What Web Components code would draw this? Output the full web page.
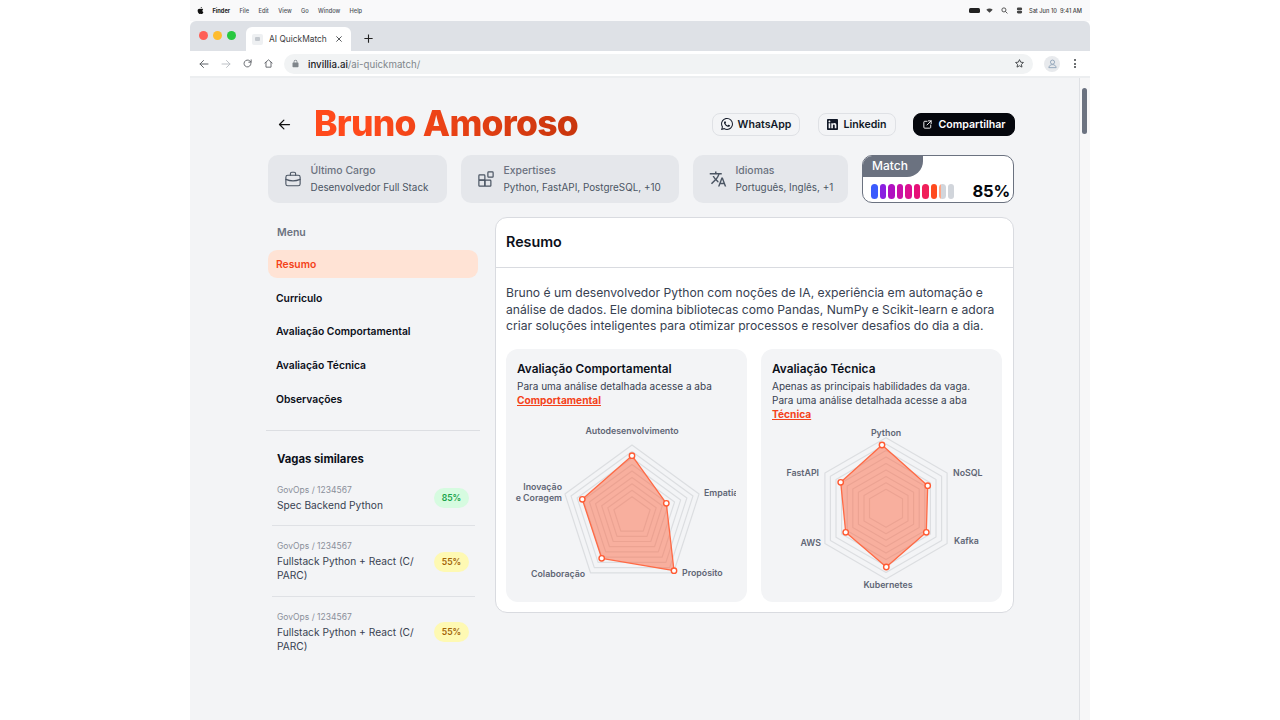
<!DOCTYPE html>
<html lang="pt">
<head>
<meta charset="utf-8">
<title>AI QuickMatch</title>
<style>
    html, body { margin: 0; height: 100%; background: #fff; overflow: hidden; }
    body { font-family: Inter, "Noto Sans", sans-serif; display: flex; justify-content: center; }
    #frame { width: 900px; height: 720px; display: flex; flex-direction: column; flex: none; }
</style>
</head>
<body>
<div id="frame">
    <mac-menubar></mac-menubar>
    <browser-chrome></browser-chrome>
    <app-page>
        <profile-header name="Bruno Amoroso"></profile-header>
        <stat-row>
            <stat-card style="width:179px" icon="case" label="Último Cargo" value="Desenvolvedor Full Stack"></stat-card>
            <stat-card style="width:218px" icon="blocks" label="Expertises" value="Python, FastAPI, PostgreSQL, +10"></stat-card>
            <stat-card style="width:155px" icon="lang" label="Idiomas" value="Português, Inglês, +1"></stat-card>
            <match-card value="85%"></match-card>
        </stat-row>
        <page-columns>
            <side-bar slot="side">
                <side-menu></side-menu>
                <job-item ref="GovOps / 1234567" title="Spec Backend Python" score="85%" tone="good"></job-item>
                <job-item ref="GovOps / 1234567" title="Fullstack Python + React (C/ PARC)" score="55%" tone="mid"></job-item>
                <job-item ref="GovOps / 1234567" title="Fullstack Python + React (C/ PARC)" score="55%" tone="mid" last></job-item>
            </side-bar>
            <summary-panel slot="main" heading="Resumo">
                <p>Bruno é um desenvolvedor Python com noções de IA, experiência em automação e análise de dados. Ele domina bibliotecas como Pandas, NumPy e Scikit-learn e adora criar soluções inteligentes para otimizar processos e resolver desafios do dia a dia.</p>
                <score-card slot="cards" heading="Avaliação Comportamental" text="Para uma análise detalhada acesse a aba" link="Comportamental" chart="behaviour"></score-card>
                <score-card slot="cards" heading="Avaliação Técnica" text="Apenas as principais habilidades da vaga. Para uma análise detalhada acesse a aba" link="Técnica" chart="tech"></score-card>
            </summary-panel>
        </page-columns>
    </app-page>
</div>

<script>
const ICONS = {
    apple: '<path d="M12.152 6.896c-.948 0-2.415-1.078-3.96-1.04-2.04.027-3.91 1.183-4.961 3.014-2.117 3.675-.546 9.103 1.519 12.09 1.013 1.454 2.208 3.09 3.792 3.039 1.52-.065 2.09-.987 3.935-.987 1.831 0 2.35.987 3.96.948 1.637-.026 2.676-1.48 3.676-2.948 1.156-1.688 1.636-3.325 1.662-3.415-.039-.013-3.182-1.221-3.22-4.857-.026-3.04 2.48-4.494 2.597-4.559-1.429-2.09-3.623-2.324-4.39-2.376-2-.156-3.675 1.09-4.61 1.09zM15.53 3.83c.843-1.012 1.4-2.427 1.245-3.83-1.207.052-2.662.805-3.532 1.818-.78.896-1.454 2.338-1.273 3.714 1.338.104 2.715-.688 3.559-1.701" fill="currentColor"/>',
    whatsapp: '<path fill="currentColor" d="M17.472 14.382c-.297-.149-1.758-.867-2.03-.967-.273-.099-.471-.148-.67.15-.197.297-.767.966-.94 1.164-.173.199-.347.223-.644.075-.297-.15-1.255-.463-2.39-1.475-.883-.788-1.48-1.761-1.653-2.059-.173-.297-.018-.458.13-.606.134-.133.298-.347.446-.52.149-.174.198-.298.298-.497.099-.198.05-.371-.025-.52-.075-.149-.669-1.612-.916-2.207-.242-.579-.487-.5-.669-.51-.173-.008-.371-.01-.57-.01-.198 0-.52.074-.792.372-.272.297-1.04 1.016-1.04 2.479 0 1.462 1.065 2.875 1.213 3.074.149.198 2.096 3.2 5.077 4.487.709.306 1.262.489 1.694.625.712.227 1.36.195 1.871.118.571-.085 1.758-.719 2.006-1.413.248-.694.248-1.289.173-1.413-.074-.124-.272-.198-.57-.347m-5.421 7.403h-.004a9.87 9.87 0 01-5.031-1.378l-.361-.214-3.741.982.998-3.648-.235-.374a9.86 9.86 0 01-1.51-5.26c.001-5.45 4.436-9.884 9.888-9.884 2.64 0 5.122 1.03 6.988 2.898a9.825 9.825 0 012.893 6.994c-.003 5.45-4.437 9.884-9.885 9.884m8.413-18.297A11.815 11.815 0 0012.05 0C5.495 0 .16 5.335.157 11.892c0 2.096.547 4.142 1.588 5.945L.057 24l6.305-1.654a11.882 11.882 0 005.683 1.448h.005c6.554 0 11.89-5.335 11.893-11.893a11.821 11.821 0 00-3.48-8.413z"/>',
    linkedin: '<path fill="currentColor" d="M20.447 20.452h-3.554v-5.569c0-1.328-.027-3.037-1.852-3.037-1.853 0-2.136 1.445-2.136 2.939v5.667H9.351V9h3.414v1.561h.046c.477-.9 1.637-1.85 3.37-1.85 3.601 0 4.267 2.37 4.267 5.455v6.286zM5.337 7.433c-1.144 0-2.063-.926-2.063-2.065 0-1.138.92-2.063 2.063-2.063 1.14 0 2.064.925 2.064 2.063 0 1.139-.925 2.065-2.064 2.065zm1.782 13.019H3.555V9h3.564v11.452zM22.225 0H1.771C.792 0 0 .774 0 1.729v20.542C0 23.227.792 24 1.771 24h20.451C23.2 24 24 23.227 24 22.271V1.729C24 .774 23.2 0 22.222 0h.003z"/>',
    share: '<g fill="none" stroke="currentColor" stroke-width="2" stroke-linecap="round" stroke-linejoin="round"><path d="M11 5H6a2 2 0 0 0-2 2v11a2 2 0 0 0 2 2h11a2 2 0 0 0 2-2v-5"/><path d="M14 4h6v6M20 4l-9 9"/></g>',
    case: '<g fill="none" stroke="currentColor" stroke-width="1.5" stroke-linejoin="round" stroke-linecap="round"><rect x="2.5" y="7" width="19" height="14" rx="2.5"/><path d="M8.5 7V5a2 2 0 0 1 2-2h3a2 2 0 0 1 2 2v2M2.5 12.5c6 2.6 13 2.6 19 0"/></g>',
    blocks: '<g fill="none" stroke="currentColor" stroke-width="1.6" stroke-linejoin="round"><rect x="2.5" y="6.5" width="8" height="7" rx="1"/><rect x="2.5" y="13.5" width="8" height="8" rx="1"/><rect x="10.5" y="13.5" width="8" height="8" rx="1"/><rect x="14.5" y="2.5" width="7" height="7" rx="1"/></g>',
    lang: '<path fill="currentColor" d="M12.87 15.07l-2.54-2.51.03-.03c1.74-1.94 2.98-4.17 3.71-6.53H17V4h-7V2H8v2H1v1.99h11.17C11.5 7.92 10.44 9.75 9 11.35 8.07 10.32 7.3 9.19 6.69 8h-2c.73 1.63 1.73 3.17 2.98 4.56l-5.09 5.02L4 19l5-5 3.11 3.11.76-2.04zM18.5 10h-2L12 22h2l1.12-3h4.75L21 22h2l-4.5-12zm-2.62 7l1.62-4.33L19.12 17h-3.24z"/>',
    back: '<path d="M20 12H4M11 5l-7 7 7 7" fill="none" stroke="currentColor" stroke-width="2" stroke-linecap="round" stroke-linejoin="round"/>',
    forward: '<path d="M4 12h16M13 5l7 7-7 7" fill="none" stroke="currentColor" stroke-width="2" stroke-linecap="round" stroke-linejoin="round"/>',
    reload: '<path d="M19.5 12a7.5 7.5 0 1 1-2.2-5.3L20 9.2M20 4v5.2h-5.2" fill="none" stroke="currentColor" stroke-width="2" stroke-linecap="round" stroke-linejoin="round"/>',
    home: '<path d="M4 11l8-7 8 7M6.5 9.5V20h11V9.5" fill="none" stroke="currentColor" stroke-width="2" stroke-linejoin="round" stroke-linecap="round"/>',
    lock: '<path fill="currentColor" d="M18 9h-1V7a5 5 0 0 0-10 0v2H6a2 2 0 0 0-2 2v9a2 2 0 0 0 2 2h12a2 2 0 0 0 2-2v-9a2 2 0 0 0-2-2zM9 7a3 3 0 0 1 6 0v2H9z"/>',
    star: '<path d="M12 3.5l2.6 5.6 6 .7-4.5 4.1 1.3 6-5.4-3-5.4 3 1.3-6L3.4 9.8l6-.7z" fill="none" stroke="currentColor" stroke-width="2" stroke-linejoin="round"/>',
    close: '<path d="M5 5l14 14M19 5L5 19" fill="none" stroke="currentColor" stroke-width="2.6" stroke-linecap="round"/>',
    plus: '<path d="M12 3v18M3 12h18" fill="none" stroke="currentColor" stroke-width="2.4"/>',
    wifi: '<path fill="currentColor" d="M12 20L1 9c6-5.5 16-5.5 22 0z"/>',
    search: '<g fill="none" stroke="currentColor" stroke-width="3"><circle cx="10" cy="10" r="7"/><path d="M15 15l7 7"/></g>',
    control: '<g fill="currentColor"><rect x="3" y="2" width="18" height="9" rx="4.5"/><rect x="3" y="13" width="18" height="9" rx="4.5"/></g>',
    user: '<g fill="none" stroke="#8fa3b8" stroke-width="2"><circle cx="12" cy="9" r="4.5"/><path d="M4 21c1-5 4-6.5 8-6.5s7 1.5 8 6.5z"/></g>'
};
const svgIcon = (name, size) => `<svg width="${size}" height="${size}" viewBox="0 0 24 24" aria-hidden="true">${ICONS[name]}</svg>`;

class MacMenubar extends HTMLElement {
    connectedCallback() {
        const root = this.attachShadow({mode: 'open'});
        root.innerHTML = `
        <style>
            :host { display: flex; align-items: center; height: 21px; background: #f9f9fa; color: #4b4f57;
                    font: 500 5.7px Inter, sans-serif; padding: 0 8px 0 7px; box-sizing: border-box; flex: none; }
            .left { display: flex; align-items: center; gap: 9.4px; }
            .apple { color: #111; display: flex; margin-right: -1px; }
            b { color: #222; font-weight: 700; }
            .right { margin-left: auto; display: flex; align-items: center; gap: 8px; color: #444; }
            .right .ctl { margin-right: -2px; display: flex; }
            .bat { width: 11px; height: 5px; border-radius: 1.5px; background: #222; margin-right: -2px; }
        </style>
        <div class="left"><span class="apple">${svgIcon('apple', 7)}</span><b>Finder</b><span>File</span><span>Edit</span><span>View</span><span>Go</span><span>Window</span><span>Help</span></div>
        <div class="right"><span class="bat"></span>${svgIcon('wifi', 7)}${svgIcon('search', 7)}<span class="ctl">${svgIcon('control', 7)}</span><span>Sat Jun 10&nbsp; 9:41 AM</span></div>`;
    }
}

class BrowserChrome extends HTMLElement {
    connectedCallback() {
        const root = this.attachShadow({mode: 'open'});
        root.innerHTML = `
        <style>
            :host { display: block; flex: none; font-family: Inter, sans-serif; color: #3c4043; }
            .strip { height: 30px; background: #dee1e6; border-radius: 6px 6px 0 0; display: flex; align-items: flex-end; box-sizing: border-box; }
            .lights { display: flex; gap: 5px; width: 56px; padding: 0 0 11px 9px; box-sizing: border-box; }
            .lights i { width: 9px; height: 9px; border-radius: 50%; }
            .tab { width: 105px; height: 24px; background: #fff; border-radius: 6px 6px 0 0; display: flex; align-items: center;
                   font-size: 8.4px; padding: 0 8px 0 6px; box-sizing: border-box; }
            .fav { width: 11px; height: 11px; background: #eef0f2; border-radius: 2px; margin-right: 6px; display: flex; align-items: center; justify-content: center; }
            .fav i { width: 5px; height: 4px; background: #c3c8ce; border-radius: 1px; }
            .tab svg { margin-left: auto; }
            .plus { margin: 0 0 7px 12px; display: flex; color: #222; }
            .bar { height: 25px; background: #fff; display: flex; align-items: center; padding-left: 8px; box-sizing: border-box; }
            .nav { display: flex; gap: 10px; width: 86px; color: #5f6368; flex: none; }
            .nav .off { color: #bdc1c6; }
            .omni { width: 749px; height: 20px; border-radius: 10px; background: #f1f3f4; display: flex; align-items: center;
                    padding: 0 8px 0 7px; box-sizing: border-box; font-size: 9.7px; gap: 8px; flex: none; }
            .omni span { color: #80868b; } .omni b { font-weight: 500; color: #202124; }
            .omni div { padding-top: 1px; }
            .omni .star { margin-left: auto; display: flex; color: #3c4043; }
            .lock { display: flex; color: #5f6368; }
            .avatar { width: 16px; height: 16px; border-radius: 50%; background: #e8eaed; display: flex; align-items: center; justify-content: center; margin-left: 11px; }
            .dots { margin-left: 14px; display: flex; flex-direction: column; gap: 1.5px; }
            .dots i { width: 2px; height: 2px; border-radius: 50%; background: #3c4043; }
            .edge { height: 2px; background: #eceef0; }
        </style>
        <div class="strip">
            <div class="lights"><i style="background:#ff5f57"></i><i style="background:#febc2e"></i><i style="background:#28c840"></i></div>
            <div class="tab"><span class="fav"><i></i></span>AI QuickMatch${svgIcon('close', 8)}</div>
            <span class="plus">${svgIcon('plus', 11)}</span>
        </div>
        <div class="bar">
            <div class="nav">${svgIcon('back', 12)}<span class="off" style="display:flex">${svgIcon('forward', 12)}</span>${svgIcon('reload', 11)}${svgIcon('home', 11)}</div>
            <div class="omni"><span class="lock">${svgIcon('lock', 9)}</span><div><b>invillia.ai</b><span>/ai-quickmatch/</span></div><span class="star">${svgIcon('star', 11)}</span></div>
            <span class="avatar">${svgIcon('user', 11)}</span>
            <span class="dots"><i></i><i></i><i></i></span>
        </div>
        <div class="edge"></div>`;
    }
}

class AppPage extends HTMLElement {
    constructor() {
        super();
        const root = this.attachShadow({mode: 'open'});
        root.innerHTML = `
        <style>
            :host { display: flex; flex: 1; min-height: 0; background: #f3f4f6; }
            .content { width: 889px; box-sizing: border-box; padding: 32px 0 0 78px; }
            .track { width: 11px; box-sizing: border-box; border-left: 1px solid #dfe1e5; background: #f7f7f8; padding: 10px 0 0 2px; }
            .thumb { width: 5px; height: 46px; border-radius: 3px; background: #6b7280; }
        </style>
        <div class="content"><slot></slot></div>
        <div class="track"><div class="thumb"></div></div>`;
    }
}

class ProfileHeader extends HTMLElement {
    connectedCallback() {
        const root = this.attachShadow({mode: 'open'});
        root.innerHTML = `
        <style>
            :host { display: flex; align-items: center; height: 28px; width: 747px; margin-bottom: 17px; }
            .back { display: flex; margin: 0 21px 0 9px; color: #111; }
            h1 { margin: 0; font: 800 35.5px/1 Inter, sans-serif; letter-spacing: -.75px; padding-left: 1px;
                 background: linear-gradient(100deg, #ff4a1c 20%, #c8350c); -webkit-background-clip: text; background-clip: text; color: transparent; }
            .btns { margin-left: auto; display: flex; }
            a { display: flex; align-items: center; justify-content: center; gap: 5px; height: 23px; box-sizing: border-box; border: 1px solid #dfe1e5;
                border-radius: 8px; font: 600 10.6px Inter, sans-serif; color: #111827; }
            a.dark { background: #05070d; color: #fff; border-color: #05070d; margin-left: 17px; }
        </style>
        <span class="back">${svgIcon('back', 15)}</span>
        <h1>${this.getAttribute('name')}</h1>
        <div class="btns">
            <a style="width:88px;margin-right:18px">${svgIcon('whatsapp', 12)}WhatsApp</a>
            <a style="width:78px">${svgIcon('linkedin', 11)}Linkedin</a>
            <a class="dark" style="width:102px">${svgIcon('share', 11)}Compartilhar</a>
        </div>`;
    }
}

class StatRow extends HTMLElement {
    constructor() {
        super();
        this.attachShadow({mode: 'open'}).innerHTML = `
        <style>:host { display: flex; gap: 14px; width: 746px; margin-bottom: 14px; }</style><slot></slot>`;
    }
}

class StatCard extends HTMLElement {
    connectedCallback() {
        const root = this.attachShadow({mode: 'open'});
        root.innerHTML = `
        <style>
            :host { display: flex; align-items: center; height: 48px; background: #e5e7eb; border-radius: 10px; box-sizing: border-box;
                    padding-left: 16px; gap: 8.5px; color: #4b5563; font-family: Inter, sans-serif; flex: none; }
            svg { flex: none; }
            div { display: flex; flex-direction: column; gap: 4.5px; white-space: nowrap; }
            .l { font: 500 10.4px/12px Inter, sans-serif; color: #6b7280; }
            .v { font: 400 9.9px/12px Inter, sans-serif; color: #4b5563; }
        </style>
        ${svgIcon(this.getAttribute('icon'), 18)}
        <div><span class="l">${this.getAttribute('label')}</span><span class="v">${this.getAttribute('value')}</span></div>`;
    }
}

class MatchCard extends HTMLElement {
    connectedCallback() {
        const root = this.attachShadow({mode: 'open'});
        const colours = ['#3b5bfd', '#8a1fe0', '#b010c0', '#c810a8', '#dc0f90', '#e60f78', '#f0205a', '#ff4a1e',
            'linear-gradient(90deg,#ffa888 30%,#d1d5db 30%)', '#d1d5db'];
        root.innerHTML = `
        <style>
            :host { display: block; width: 152px; height: 48px; box-sizing: border-box; background: #fff; border: 1px solid #6b7280;
                    border-radius: 10px; overflow: hidden; flex: none; font-family: Inter, sans-serif; }
            .tab { width: 60px; height: 21px; background: #6b7280; color: #fff; font: 500 12px/20px Inter, sans-serif; padding-left: 9px;
                   box-sizing: border-box; border-bottom-right-radius: 16px; }
            .row { display: flex; align-items: center; justify-content: space-between; padding: 6px 3px 0 8px; }
            .bars { display: flex; gap: 2px; }
            .bars i { width: 6.5px; height: 15px; border-radius: 4px; }
            b { font: 700 16.5px/16px Inter, sans-serif; color: #05070d; letter-spacing: -.2px; }
        </style>
        <div class="tab">Match</div>
        <div class="row"><div class="bars">${colours.map(c => `<i style="background:${c}"></i>`).join('')}</div><b>${this.getAttribute('value')}</b></div>`;
    }
}

class PageColumns extends HTMLElement {
    constructor() {
        super();
        this.attachShadow({mode: 'open'}).innerHTML = `
        <style>
            :host { display: flex; width: 746px; }
            .side { width: 227px; flex: none; }
            .main { width: 519px; flex: none; }
        </style>
        <div class="side"><slot name="side"></slot></div>
        <div class="main"><slot name="main"></slot></div>`;
    }
}

class SideBar extends HTMLElement {
    constructor() {
        super();
        this.attachShadow({mode: 'open'}).innerHTML = `
        <style>:host { display: block; }</style><slot></slot>`;
    }
}

class SideMenu extends HTMLElement {
    connectedCallback() {
        const root = this.attachShadow({mode: 'open'});
        const items = ['Resumo', 'Curriculo', 'Avaliação Comportamental', 'Avaliação Técnica', 'Observações'];
        root.innerHTML = `
        <style>
            :host { display: block; width: 214px; margin-left: -2px; font-family: Inter, sans-serif; }
            .menu { font: 600 10.5px/14px Inter, sans-serif; color: #6b7280; padding: 9px 0 0 11px; margin-bottom: 10px; }
            ul { list-style: none; margin: 0 0 0 2px; padding: 0; width: 210px; display: flex; flex-direction: column; gap: 5.7px; }
            li { height: 28px; border-radius: 9px; font: 600 10.3px/29px Inter, sans-serif; color: #0b0f19; padding-left: 8px; box-sizing: border-box; }
            li.on { background: #ffe3d5; color: #f4421a; }
            h2 { font: 700 11.3px/16px Inter, sans-serif; color: #0b0f19; margin: 0; padding: 20px 0 3px 11px; border-top: 1px solid #dcdee2; }
            .rule { margin-top: 17px; }
        </style>
        <div class="menu">Menu</div>
        <ul>${items.map((t, i) => `<li class="${i === 0 ? 'on' : ''}">${t}</li>`).join('')}</ul>
        <div class="rule"><h2>Vagas similares</h2></div>`;
    }
}

class JobItem extends HTMLElement {
    connectedCallback() {
        const root = this.attachShadow({mode: 'open'});
        const good = this.getAttribute('tone') === 'good';
        root.innerHTML = `
        <style>
            :host { display: flex; width: 203px; margin-left: 4px; box-sizing: border-box; padding: 15px 6px 13.5px 5px; align-items: center;
                    border-bottom: 1px solid #dfe1e5; font-family: Inter, sans-serif; }
            :host([last]) { border-bottom: 0; }
            .t { flex: 1; min-width: 0; }
            small { display: block; font: 400 8.5px/11px Inter, sans-serif; color: #8a8f9a; margin-bottom: 2px; }
            div.n { font: 400 10.2px/14px Inter, sans-serif; color: #374151; }
            .p { width: 35px; height: 20px; flex: none; margin-left: 10px; border-radius: 10px; text-align: center;
                 font: 600 8.6px/20px Inter, sans-serif; background: ${good ? '#d6fbe0' : '#fef9b3'}; color: ${good ? '#16a34a' : '#a16207'}; }
        </style>
        <div class="t"><small>${this.getAttribute('ref')}</small><div class="n">${this.getAttribute('title')}</div></div>
        <span class="p">${this.getAttribute('score')}</span>`;
    }
}

class SummaryPanel extends HTMLElement {
    connectedCallback() {
        const root = this.attachShadow({mode: 'open'});
        root.innerHTML = `
        <style>
            :host { display: block; box-sizing: border-box; width: 519px; height: 396px; background: #fff; border: 1px solid #d9dbe0; border-radius: 12px;
                    font-family: Inter, sans-serif; }
            h2 { margin: 0; height: 50px; box-sizing: border-box; border-bottom: 1px solid #d9dbe0; padding-left: 10px;
                 font: 600 14.3px/48px Inter, sans-serif; color: #0b0f19; }
            .body { padding: 17px 10px 0; }
            ::slotted(p) { margin: 0 0 14px; font: 400 12.15px/16.6px Inter, sans-serif; color: #374151; }
            .cards { display: flex; gap: 14px; }
        </style>
        <h2>${this.getAttribute('heading')}</h2>
        <div class="body"><slot></slot><div class="cards"><slot name="cards"></slot></div></div>`;
    }
}

class ScoreCard extends HTMLElement {
    connectedCallback() {
        const root = this.attachShadow({mode: 'open'});
        root.innerHTML = `
        <style>
            :host { display: flex; flex-direction: column; width: 241px; height: 253px; box-sizing: border-box; padding: 13px 11px 4px; background: #f3f4f6;
                    border-radius: 12px; font-family: Inter, sans-serif; }
            h3 { margin: 0 0 3px; font: 600 11.85px/14px Inter, sans-serif; color: #0b0f19; }
            p { margin: 0; font: 400 10px/14px Inter, sans-serif; color: #374151; }
            a { display: block; color: #f4421a; font-size: 10.2px; font-weight: 700; text-decoration: underline; }
            radar-chart { margin-top: auto; margin-left: -2px; }
        </style>
        <h3>${this.getAttribute('heading')}</h3>
        <p>${this.getAttribute('text')}<a>${this.getAttribute('link')}</a></p>
        <radar-chart chart="${this.getAttribute('chart')}"></radar-chart>`;
    }
}

const CHARTS = {
    behaviour: {
        cx: 117, cy: 97.7, sides: 5, dx: 0,
        pts: [[117, 37.7], [151.3, 85.3], [159, 152.7], [86.7, 140.3], [67.3, 81.3]],
        labels: [[117, 16, 'middle', 'Autodesenvolvimento'], [189, 78, 'start', 'Empatia'], [47, 72, 'end', 'Inovação'], [47, 83, 'end', 'e Coragem'],
                 [16, 159, 'start', 'Colaboração'], [167, 158, 'start', 'Propósito']]
    },
    tech: {
        cx: 115, cy: 90.3, sides: 6, dx: 1,
        pts: [[111, 27], [156.7, 67.7], [155.3, 114.3], [115.3, 149], [74.7, 114.3], [69.7, 64.3]],
        labels: [[115, 18, 'middle', 'Python'], [182, 58, 'start', 'NoSQL'], [183, 126, 'start', 'Kafka'], [117, 170, 'middle', 'Kubernetes'],
                 [50, 128, 'end', 'AWS'], [48, 58, 'end', 'FastAPI']]
    }
};

class RadarChart extends HTMLElement {
    connectedCallback() {
        const root = this.attachShadow({mode: 'open'});
        const c = CHARTS[this.getAttribute('chart')];
        const ringPts = r => Array.from({length: c.sides}, (_, i) => {
            const a = -Math.PI / 2 + i * 2 * Math.PI / c.sides;
            return `${(c.cx + r * Math.cos(a)).toFixed(1)},${(c.cy + r * Math.sin(a)).toFixed(1)}`;
        }).join(' ');
        let rings = '';
        for (let i = 0; i < 9; i++) {
            rings += `<polygon points="${ringPts(19 + i * 6.45)}" fill="none" stroke="#dcdee1" stroke-width="1.2" stroke-linejoin="round"/>`;
        }
        const area = c.pts.map(p => p.join(',')).join(' ');
        root.innerHTML = `
        <style>
            :host { display: block; width: 221px; height: 176px; }
            svg { display: block; overflow: hidden; }
            text { font: 600 8.8px Inter, sans-serif; fill: #5f6675; }
        </style>
        <svg width="221" height="176" viewBox="${-c.dx} 4 221 176">
            ${rings}
            <polygon points="${area}" fill="#ff5a32" fill-opacity=".45" stroke="#ff6a45" stroke-width="1.3" stroke-linejoin="round"/>
            ${c.pts.map(p => `<circle cx="${p[0]}" cy="${p[1]}" r="2.7" fill="#fff" stroke="#ff5a32" stroke-width="1.4"/>`).join('')}
            ${c.labels.map(l => `<text x="${l[0]}" y="${l[1]}" text-anchor="${l[2]}">${l[3]}</text>`).join('')}
        </svg>`;
    }
}

customElements.define('mac-menubar', MacMenubar);
customElements.define('browser-chrome', BrowserChrome);
customElements.define('app-page', AppPage);
customElements.define('profile-header', ProfileHeader);
customElements.define('stat-row', StatRow);
customElements.define('stat-card', StatCard);
customElements.define('match-card', MatchCard);
customElements.define('page-columns', PageColumns);
customElements.define('side-bar', SideBar);
customElements.define('side-menu', SideMenu);
customElements.define('job-item', JobItem);
customElements.define('summary-panel', SummaryPanel);
customElements.define('score-card', ScoreCard);
customElements.define('radar-chart', RadarChart);
</script>
</body>
</html>
